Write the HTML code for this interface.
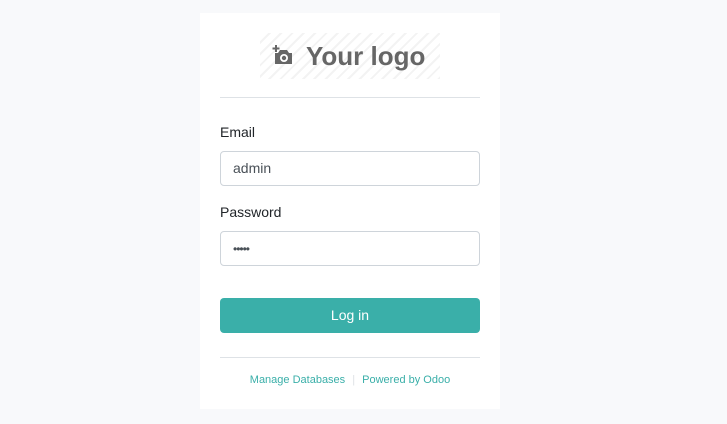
<!DOCTYPE html>
<html><head><style>
body{margin:0;background:#f8f9fb;width:727px;height:424px;font-family:"Liberation Sans",sans-serif;position:relative;overflow:hidden}
.card{position:absolute;left:200px;top:13px;width:300px;height:396px;background:#fff}
.logo{position:absolute;left:60px;top:20px;width:180px;height:46px;background:repeating-linear-gradient(135deg,#fff 0 6px,#f3f3f3 6px 8px);}
.logo span{position:absolute;left:46px;top:8px;font-size:26px;font-weight:bold;color:#666;letter-spacing:0}
.hr{position:absolute;left:20px;width:260px;height:1px;background:#dee2e6}
.lbl{position:absolute;left:20px;font-size:14px;color:#212529}
.inp{position:absolute;left:20px;width:258px;height:33px;border:1px solid #ced4da;border-radius:4px;font-size:14px;color:#495057;line-height:33px;box-sizing:content-box}
.inp span{padding-left:12px}
.btn{position:absolute;left:20px;top:285px;width:260px;height:35px;background:#3aafa9;border-radius:4px;color:#fff;text-align:center;line-height:35px;font-size:14px}
.foot{position:absolute;top:361px;left:0;width:300px;text-align:center;font-size:11px;color:#3aafa9}
</style></head><body>
<div class="card">
<div class="logo">
<svg style="position:absolute;left:12px;top:11px" width="24" height="22" viewBox="0 0 24 22"><path d="M4 1v7M0.5 4.5h7" stroke="#666" stroke-width="2"/><path d="M3 9h3l2-3h7l2 3h3v11H3z" fill="#666"/><circle cx="12" cy="14" r="4" fill="#fff"/><circle cx="12" cy="14" r="2.2" fill="#666"/></svg>
<span>Your logo</span></div>
<div class="hr" style="top:84px"></div>
<div class="lbl" style="top:111px">Email</div>
<div class="inp" style="top:138px"><span>admin</span></div>
<div class="lbl" style="top:191px">Password</div>
<div class="inp" style="top:218px"><span style="font-size:12px;letter-spacing:-1px">•••••</span></div>
<div class="btn">Log in</div>
<div class="hr" style="top:344px"></div>
<div class="foot">Manage Databases <span style="color:#dee2e6;margin:0 4px">|</span> Powered by Odoo</div>
</div>
</body></html>
